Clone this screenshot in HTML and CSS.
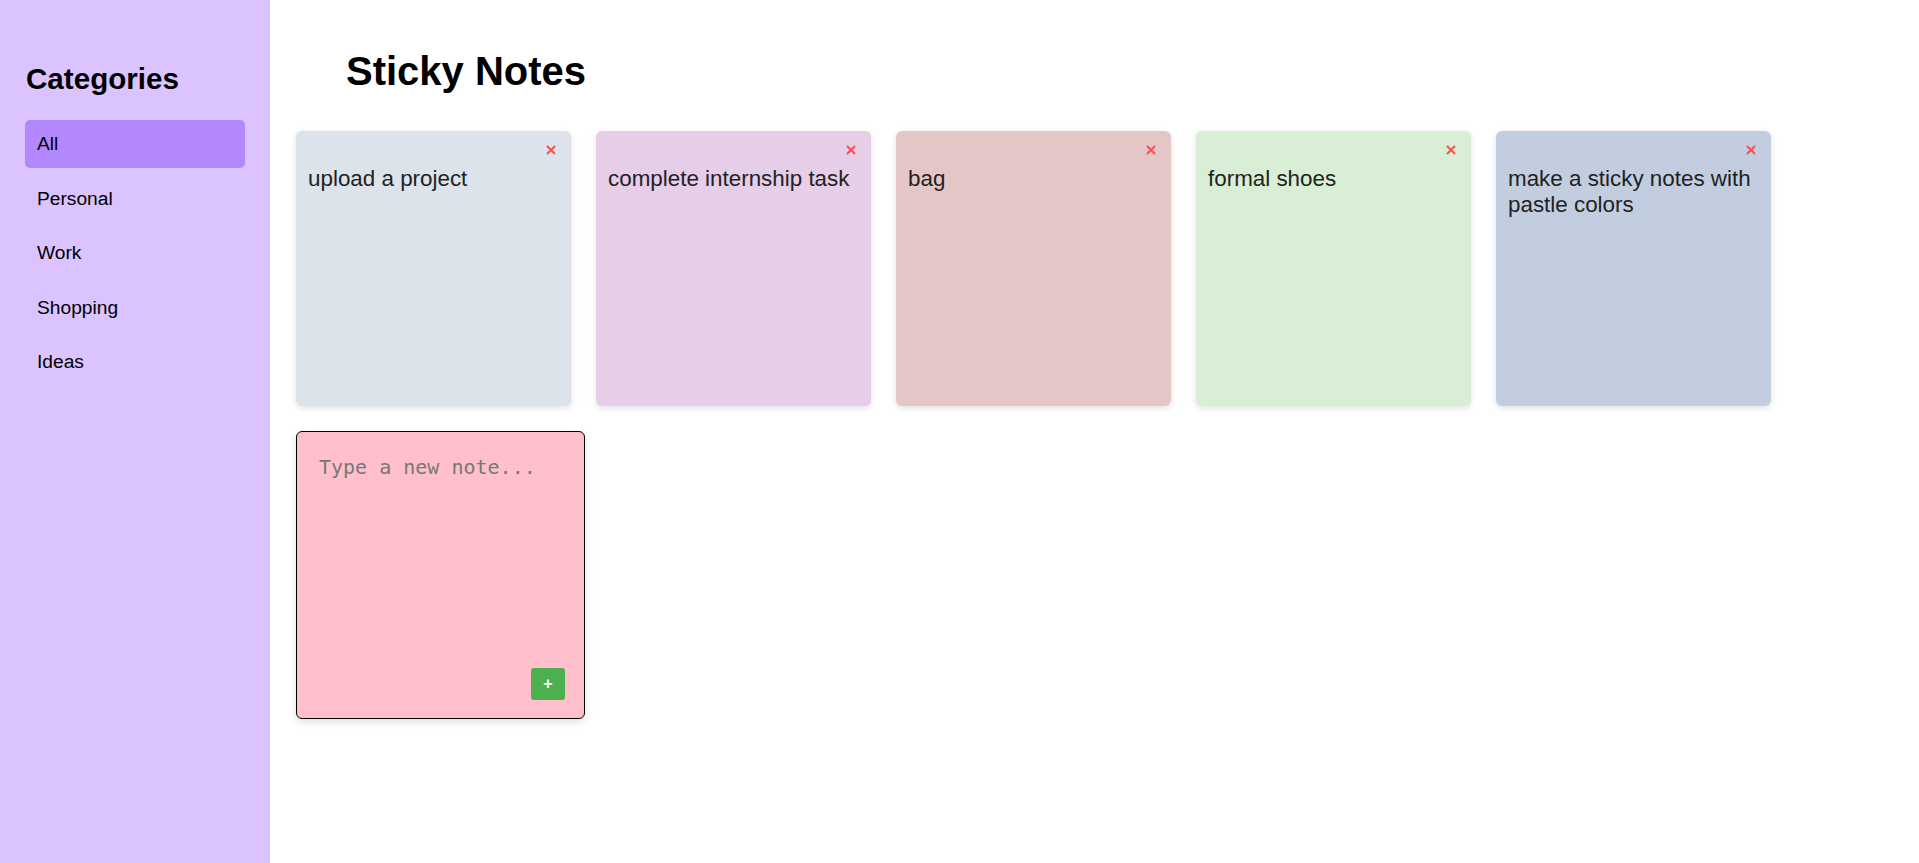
FILE: index.html
```html
<!DOCTYPE html>
<html lang="en">
<head>
<meta charset="utf-8">
<title>Sticky Notes</title>
<link rel="stylesheet" href="styles.css">
</head>
<body>
<div class="layout">
  <aside class="sidebar">
    <h2 class="sidebar-title">Categories</h2>
    <ul class="cat-list">
      <li class="cat-item active">All</li>
      <li class="cat-item">Personal</li>
      <li class="cat-item">Work</li>
      <li class="cat-item">Shopping</li>
      <li class="cat-item">Ideas</li>
    </ul>
  </aside>
  <main class="main">
    <h1 class="page-title">Sticky Notes</h1>
    <div class="notes">
      <div class="note note-1">
        <button class="note-close" aria-label="Delete"><svg width="10" height="10" viewBox="0 0 10 10"><path d="M1 1 L9 9 M9 1 L1 9" stroke="#ff4d4d" stroke-width="2" fill="none"/></svg></button>
        <p class="note-text">upload a project</p>
      </div>
      <div class="note note-2">
        <button class="note-close" aria-label="Delete"><svg width="10" height="10" viewBox="0 0 10 10"><path d="M1 1 L9 9 M9 1 L1 9" stroke="#ff4d4d" stroke-width="2" fill="none"/></svg></button>
        <p class="note-text">complete internship task</p>
      </div>
      <div class="note note-3">
        <button class="note-close" aria-label="Delete"><svg width="10" height="10" viewBox="0 0 10 10"><path d="M1 1 L9 9 M9 1 L1 9" stroke="#ff4d4d" stroke-width="2" fill="none"/></svg></button>
        <p class="note-text">bag</p>
      </div>
      <div class="note note-4">
        <button class="note-close" aria-label="Delete"><svg width="10" height="10" viewBox="0 0 10 10"><path d="M1 1 L9 9 M9 1 L1 9" stroke="#ff4d4d" stroke-width="2" fill="none"/></svg></button>
        <p class="note-text">formal shoes</p>
      </div>
      <div class="note note-5">
        <button class="note-close" aria-label="Delete"><svg width="10" height="10" viewBox="0 0 10 10"><path d="M1 1 L9 9 M9 1 L1 9" stroke="#ff4d4d" stroke-width="2" fill="none"/></svg></button>
        <p class="note-text">make a sticky notes with pastle colors</p>
      </div>
      <div class="new-note">
        <textarea class="new-note-input" placeholder="Type a new note..."></textarea>
        <button class="add-btn">+</button>
      </div>
    </div>
  </main>
</div>
</body>
</html>
```

FILE: styles.css
```css
* {
  box-sizing: border-box;
}

html, body {
  margin: 0;
  padding: 0;
}

body {
  font-family: "Liberation Sans", Arial, sans-serif;
  color: #000;
  background: #fff;
}

.layout {
  display: flex;
  align-items: stretch;
}

.sidebar {
  box-sizing: content-box;
  width: 220px;
  height: 100vh;
  padding: 25px;
  background: #dac3ff;
  flex-shrink: 0;
}

.sidebar-title {
  margin: 37px 0 24px 1px;
  font-size: 29.6px;
  font-weight: bold;
  line-height: normal;
}

.cat-list {
  list-style: none;
  margin: 0;
  padding: 0;
  display: flex;
  flex-direction: column;
  gap: 6.5px;
}

.cat-item {
  padding: 13px 12px;
  font-size: 19.2px;
  line-height: normal;
  border-radius: 5px;
  color: #000;
}

.cat-item.active {
  background: #b388ff;
}

.main {
  flex: 1;
  padding: 49px 20px 0 26px;
}

.page-title {
  margin: 0 0 37px 50px;
  font-size: 40px;
  font-weight: bold;
  line-height: normal;
}

.notes {
  display: flex;
  flex-wrap: wrap;
  gap: 25px;
  align-items: flex-start;
}

.note {
  position: relative;
  width: 275px;
  height: 275px;
  padding: 35px 11px 12px 12px;
  border-radius: 6px;
  box-shadow: 0 2px 6px rgba(0, 0, 0, 0.12);
}

.note-1 { background: #dce3eb; }
.note-2 { background: #e6cde8; }
.note-3 { background: #e5c6c7; }
.note-4 { background: #d8eed5; }
.note-5 { background: #c2cee0; }

.note-close {
  position: absolute;
  top: 14px;
  right: 15px;
  width: 10px;
  height: 10px;
  padding: 0;
  border: none;
  background: none;
  display: flex;
}

.note-text {
  margin: 0;
  font-size: 22.4px;
  line-height: normal;
  color: #222;
}

.new-note {
  width: 289px;
  height: 288px;
  padding: 20px 19px 18px 20px;
  border: 1px solid #000;
  border-radius: 6px;
  background: #ffc0cb;
  box-shadow: 0 3px 8px rgba(0, 0, 0, 0.12);
  display: flex;
  flex-direction: column;
}

.new-note-input {
  flex: 1;
  width: 100%;
  border: none;
  outline: none;
  resize: none;
  background: transparent;
  padding: 3px 2px 2px 2px;
  font-family: "DejaVu Sans Mono", monospace;
  font-size: 20px;
  line-height: normal;
  color: #222;
}

.new-note-input::placeholder {
  color: #777;
}

.add-btn {
  align-self: flex-end;
  width: 34px;
  height: 32px;
  border: none;
  border-radius: 3px;
  background: #4caf50;
  color: #fff;
  font-family: "Liberation Sans", Arial, sans-serif;
  font-size: 16px;
  font-weight: bold;
  padding: 0;
  margin-top: 8px;
}
```
